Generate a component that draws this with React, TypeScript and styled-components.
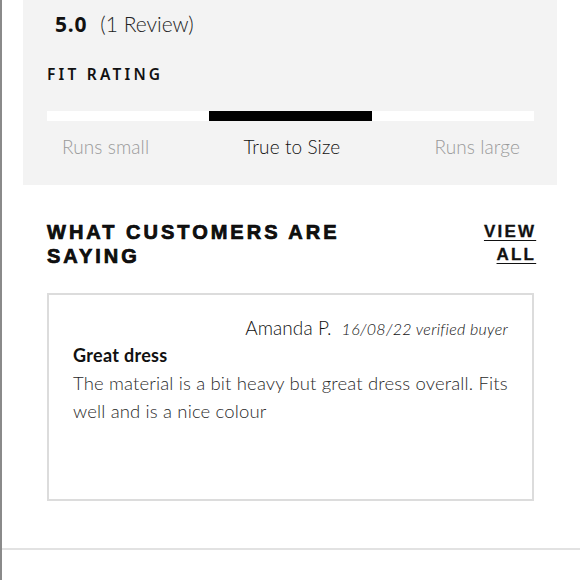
import React from "react";
import styled, { createGlobalStyle } from "styled-components";

const Global = createGlobalStyle`
  html, body { margin: 0; padding: 0; background: #fff; }
  body { font-family: Lato, "Open Sans", sans-serif; color: #111; }
`;

const Page = styled.div`
  width: 580px;
  height: 580px;
  box-sizing: border-box;
  border-left: 2px solid #8a8a8a;
  position: relative;
  overflow: hidden;
`;

const Summary = styled.section`
  margin-left: 21px;
  width: 534px;
  height: 185px;
  background: #f3f3f3;
  box-sizing: border-box;
  padding: 10px 23px 0 24px;
  display: flex;
  flex-direction: column;
`;

const ScoreRow = styled.div`
  display: flex;
  align-items: baseline;
  gap: 13px;
  padding-left: 8px;
  height: 30px;
`;

const Score = styled.span`
  font-family: "Noto Sans", sans-serif;
  font-weight: 700;
  font-size: 21px;
  letter-spacing: 0.8px;
`;

const Count = styled.span`
  font-weight: 300;
  font-size: 21px;
  color: #222;
`;

const FitTitle = styled.h3`
  margin: 24px 0 0;
  font-family: "Noto Sans", sans-serif;
  font-weight: 600;
  font-size: 15.5px;
  letter-spacing: 3.2px;
  height: 20px;
  line-height: 20px;
`;

const Track = styled.div`
  margin-top: 27px;
  height: 10px;
  background: #fff;
  display: grid;
  grid-template-columns: 162px 163px 1fr;
`;

const Segment = styled.div<{ $on?: boolean }>`
  background: ${(p) => (p.$on ? "#000" : "transparent")};
`;

const Labels = styled.div`
  display: flex;
  justify-content: space-between;
  padding: 0 14px 0 15px;
  margin-top: 14px;
  line-height: 24px;
`;

const Label = styled.span<{ $active?: boolean }>`
  font-weight: 300;
  font-size: 19px;
  letter-spacing: 0.1px;
  color: ${(p) => (p.$active ? "#111" : "#9a9a9a")};
`;

const Header = styled.div`
  display: flex;
  justify-content: space-between;
  align-items: flex-start;
  margin: 35px 46px 0 45px;
`;

const Heading = styled.h2`
  margin: 0;
  font-family: "Liberation Sans", Arial, sans-serif;
  font-weight: 900;
  -webkit-text-stroke: 0.7px #000;
  font-size: 20px;
  line-height: 24px;
  letter-spacing: 3px;
  width: 380px;
`;

const ViewAll = styled.a`
  font-family: "Liberation Sans", Arial, sans-serif;
  font-weight: 700;
  -webkit-text-stroke: 0.3px #111;
  font-size: 17px;
  line-height: 23px;
  letter-spacing: 2.2px;
  margin-right: -2.2px;
  color: #111;
  text-align: right;
  text-decoration: underline;
  text-underline-offset: 3px;
  width: 72px;
`;

const Card = styled.article`
  margin: 25px 46px 0 45px;
  height: 208px;
  box-sizing: border-box;
  border: 2px solid #dcdcdc;
  padding: 21px 24px 0 24px;
`;

const Meta = styled.div`
  display: flex;
  justify-content: flex-end;
  align-items: baseline;
  gap: 10px;
`;

const Author = styled.span`
  font-weight: 300;
  font-size: 19px;
  letter-spacing: 0.1px;
`;

const DateText = styled.span`
  font-weight: 300;
  font-style: italic;
  font-size: 16px;
  letter-spacing: 0.3px;
`;

const Title = styled.h4`
  margin: 4px 0 0;
  font-weight: 700;
  font-size: 18px;
  letter-spacing: 0.3px;
  line-height: 24px;
`;

const Body = styled.p`
  margin: 2px -8px 0 0;
  font-weight: 300;
  font-size: 18.5px;
  line-height: 28px;
  letter-spacing: 0.15px;
  color: #2a2a2a;
`;

const Rule = styled.hr`
  margin: 47px 0 0;
  border: 0;
  border-top: 2px solid #e2e2e2;
`;

export default function App() {
  return (
    <>
      <Global />
      <Page>
        <Summary>
          <ScoreRow>
            <Score>5.0</Score>
            <Count>(1 Review)</Count>
          </ScoreRow>
          <FitTitle>FIT RATING</FitTitle>
          <Track>
            <Segment />
            <Segment $on />
            <Segment />
          </Track>
          <Labels>
            <Label>Runs small</Label>
            <Label $active>True to Size</Label>
            <Label>Runs large</Label>
          </Labels>
        </Summary>
        <Header>
          <Heading>WHAT CUSTOMERS ARE SAYING</Heading>
          <ViewAll href="#">VIEW ALL</ViewAll>
        </Header>
        <Card>
          <Meta>
            <Author>Amanda P.</Author>
            <DateText>16/08/22 verified buyer</DateText>
          </Meta>
          <Title>Great dress</Title>
          <Body>
            The material is a bit heavy but great dress overall. Fits well and is a nice colour
          </Body>
        </Card>
        <Rule />
      </Page>
    </>
  );
}
